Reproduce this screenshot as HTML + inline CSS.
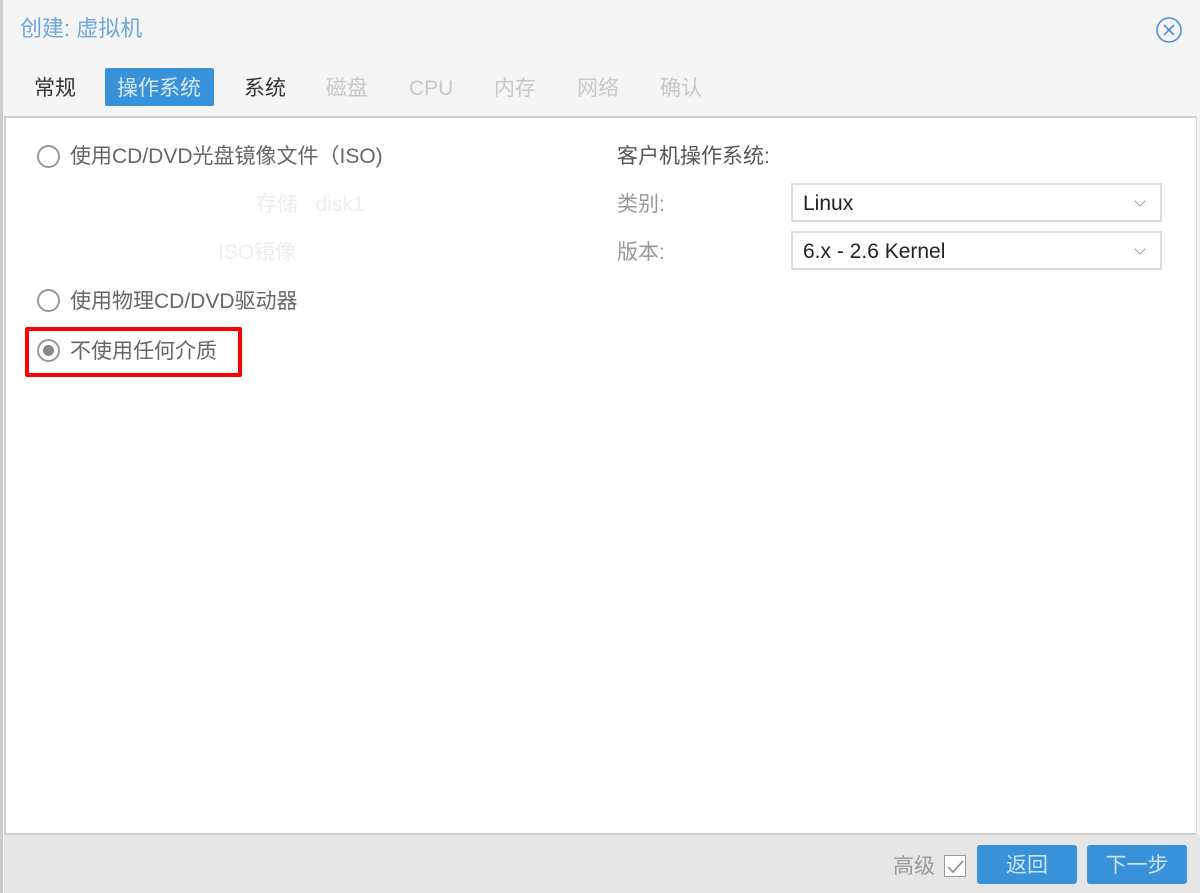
<!DOCTYPE html>
<html><head><meta charset="utf-8"><style>
*{margin:0;padding:0;box-sizing:border-box}
body{width:1200px;height:893px;background:#f5f5f5;font-family:"Liberation Sans","Noto Sans CJK SC",sans-serif;position:relative;overflow:hidden;color:#444;line-height:24px}
.a{position:absolute;white-space:nowrap}
.t{font-size:21px;top:77px}
.panel{position:absolute;left:4px;top:116px;width:1193px;height:719px;background:#fff;border:2px solid #d0d0d0;border-right:1px solid #ddd}
.foot{position:absolute;left:4px;top:835px;width:1196px;height:58px;background:#e6e6e6}
.radio{position:absolute;width:23px;height:23px;border:2px solid #999;border-radius:50%;background:#fff}
.sel{position:absolute;left:791px;width:371px;height:39px;border:2px solid #ddd;background:#fff;font-size:21px;color:#222;padding:7px 10px}
.sel:after{content:"";position:absolute;right:16px;top:12px;width:7px;height:7px;border-right:1.5px solid #999;border-bottom:1.5px solid #999;transform:rotate(45deg)}
.btn{position:absolute;top:845px;height:39px;background:#3892d9;border-radius:3px;color:#cfe2f4;font-size:21px;text-align:center;line-height:41px}
.f{font-size:21px}
</style></head><body>
<div class="a" style="left:0;top:0;width:3px;height:893px;background:#ccc"></div>
<div class="a" style="left:20px;top:17px;font-size:22px;color:#6ba6dc">创建: 虚拟机</div>
<svg class="a" style="left:1155px;top:16px" width="28" height="28" viewBox="0 0 28 28"><circle cx="14" cy="14" r="12" fill="none" stroke="#4a90d9" stroke-width="1.6"/><path d="M9 9L19 19M19 9L9 19" stroke="#4a90d9" stroke-width="1.6"/></svg>
<div class="a t" style="left:34px;color:#333">常规</div>
<div class="a" style="left:105px;top:68px;width:109px;height:38px;background:#3892d9;border-radius:2px"></div>
<div class="a t" style="left:117px;color:#d8e8f5">操作系统</div>
<div class="a t" style="left:244px;color:#333">系统</div>
<div class="a t" style="left:326px;color:#c8c8c8">磁盘</div>
<div class="a t" style="left:409px;color:#c8c8c8">CPU</div>
<div class="a t" style="left:494px;color:#c8c8c8">内存</div>
<div class="a t" style="left:577px;color:#c8c8c8">网络</div>
<div class="a t" style="left:660px;color:#c8c8c8">确认</div>
<div class="panel"></div>
<div class="foot"></div>
<div class="radio" style="left:37px;top:145px"></div>
<div class="a f" style="left:70px;top:145px;color:#666">使用CD/DVD光盘镜像文件（ISO)</div>
<div class="a f" style="left:256px;top:193px;color:#eee">存储&nbsp;&nbsp;&nbsp;disk1</div>
<div class="a f" style="left:218px;top:241px;color:#eee">ISO镜像</div>
<div class="radio" style="left:37px;top:289px"></div>
<div class="a f" style="left:70px;top:290px;color:#666">使用物理CD/DVD驱动器</div>
<div class="a" style="left:25px;top:327px;width:217px;height:50px;border:4px solid #f00;border-radius:2px"></div>
<div class="radio" style="left:37px;top:339px"><div style="position:absolute;left:4px;top:4px;width:11px;height:11px;border-radius:50%;background:#888"></div></div>
<div class="a f" style="left:70px;top:340px;color:#666">不使用任何介质</div>
<div class="a f" style="left:617px;top:145px;color:#555">客户机操作系统:</div>
<div class="a f" style="left:617px;top:193px;color:#999">类别:</div>
<div class="a f" style="left:617px;top:241px;color:#999">版本:</div>
<div class="sel" style="top:183px">Linux</div>
<div class="sel" style="top:231px">6.x - 2.6 Kernel</div>
<div class="a f" style="left:893px;top:855px;color:#999">高级</div>
<div class="a" style="left:944px;top:855px;width:22px;height:22px;border:1.5px solid #999;background:#fff"><svg width="20" height="20" style="position:absolute;left:0;top:0"><path d="M3 11L8 16L18 5" fill="none" stroke="#888" stroke-width="1.5"/></svg></div>
<div class="btn" style="left:977px;width:100px">返回</div>
<div class="btn" style="left:1087px;width:100px">下一步</div>
</body></html>
